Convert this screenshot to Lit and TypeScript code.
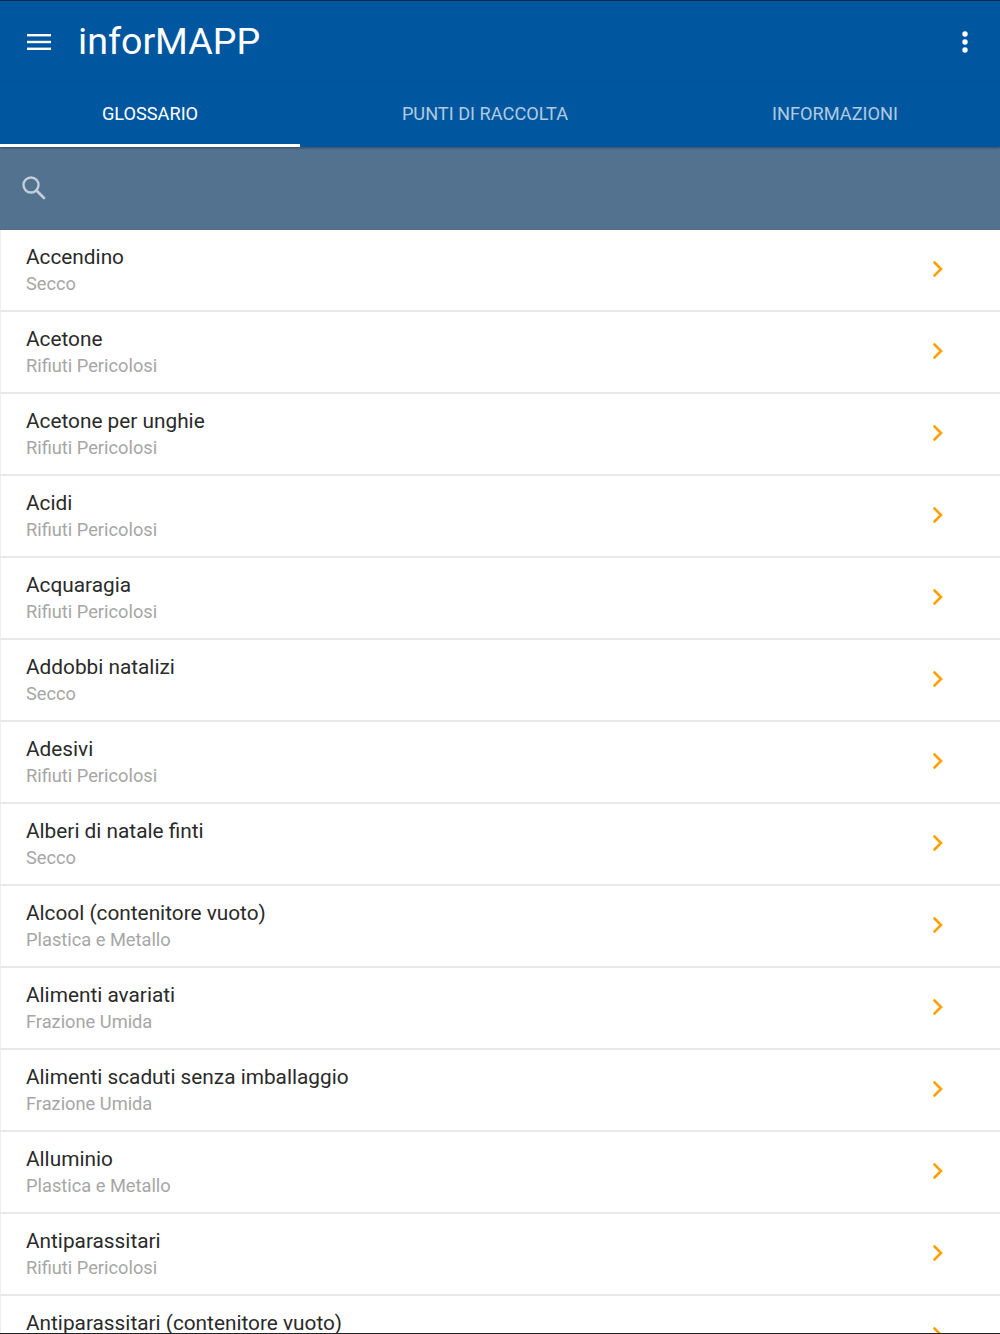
import { LitElement, html, css, svg } from 'lit';
import { customElement } from 'lit/decorators.js';

const items = [
  ['Accendino', 'Secco'],
  ['Acetone', 'Rifiuti Pericolosi'],
  ['Acetone per unghie', 'Rifiuti Pericolosi'],
  ['Acidi', 'Rifiuti Pericolosi'],
  ['Acquaragia', 'Rifiuti Pericolosi'],
  ['Addobbi natalizi', 'Secco'],
  ['Adesivi', 'Rifiuti Pericolosi'],
  ['Alberi di natale finti', 'Secco'],
  ['Alcool (contenitore vuoto)', 'Plastica e Metallo'],
  ['Alimenti avariati', 'Frazione Umida'],
  ['Alimenti scaduti senza imballaggio', 'Frazione Umida'],
  ['Alluminio', 'Plastica e Metallo'],
  ['Antiparassitari', 'Rifiuti Pericolosi'],
  ['Antiparassitari (contenitore vuoto)', 'Rifiuti Pericolosi'],
];

const chevron = svg`<path d="M1.5 1.5 L8 8 L1.5 14.5" fill="none" stroke="#ffa000" stroke-width="2.6" stroke-linecap="round" stroke-linejoin="miter"/>`;

@customElement('app-root')
export class AppRoot extends LitElement {
  static styles = css`
    :host {
      display: block;
      width: 1000px;
      height: 1334px;
      overflow: hidden;
      position: relative;
      background: #fff;
      font-family: Roboto, sans-serif;
    }
    .toolbar {
      height: 81px;
      box-sizing: border-box;
      border-top: 1px solid #0a2a4a;
      background: #01579f;
      display: flex;
      align-items: center;
      padding: 0 25px 0 27px;
      color: #fff;
    }
    .menu {
      display: block;
      width: 24px;
      height: 16px;
      flex: none;
      margin-top: 2px;
    }
    .title {
      margin: 0 0 1px 27px;
      font-size: 37.6px;
      font-weight: 400;
      flex: 1;
    }
    .more {
      display: block;
      width: 6px;
      height: 22px;
      margin: 2px 7px 0 0;
    }
    .tabs {
      height: 66px;
      background: #01579f;
      display: flex;
      box-shadow: 0 1px 2px rgba(0, 0, 0, 0.35);
      position: relative;
    }
    .tab {
      box-sizing: border-box;
      display: flex;
      align-items: center;
      justify-content: center;
      padding-bottom: 1px;
      font-size: 18.2px;
      color: rgba(255, 255, 255, 0.7);
    }
    .tab.active {
      color: #fff;
      border-bottom: 3px solid #fff;
      padding: 1px 0 0;
    }
    .search {
      height: 83px;
      box-sizing: border-box;
      background: #527290;
      display: flex;
      align-items: center;
      padding: 0 0 3px 21px;
    }
    .search svg {
      display: block;
      width: 25px;
      height: 25px;
    }
    .row {
      height: 82px;
      box-sizing: border-box;
      border-bottom: 2px solid #e8e8e8;
      box-shadow: inset 1px 0 0 #eee;
      display: flex;
      align-items: center;
      padding: 0 57px 3px 26px;
    }
    .text {
      flex: 1;
    }
    .name {
      font-size: 20.8px;
      line-height: 26px;
      padding-top: 1px;
      color: #2a2a2a;
    }
    .cat {
      font-size: 18.25px;
      line-height: 24px;
      margin-top: 2px;
      color: #a6a6a6;
      margin-bottom: -2px;
    }
    .chev {
      display: block;
      width: 10px;
      height: 16px;
    }
    .edge {
      position: absolute;
      left: 0;
      right: 0;
      bottom: 0;
      height: 1px;
      background: #222;
    }
  `;

  render() {
    return html`
      <div class="toolbar">
        <svg class="menu" viewBox="0 0 24 16">
          <rect x="0" y="0" width="24" height="2.4" fill="#fff"/>
          <rect x="0" y="6.8" width="24" height="2.4" fill="#fff"/>
          <rect x="0" y="13.6" width="24" height="2.4" fill="#fff"/>
        </svg>
        <div class="title">inforMAPP</div>
        <svg class="more" viewBox="0 0 6 22">
          <circle cx="3" cy="3" r="2.7" fill="#fff"/>
          <circle cx="3" cy="11" r="2.7" fill="#fff"/>
          <circle cx="3" cy="19" r="2.7" fill="#fff"/>
        </svg>
      </div>
      <div class="tabs">
        <div class="tab active" style="width:300px">GLOSSARIO</div>
        <div class="tab" style="width:370px">PUNTI DI RACCOLTA</div>
        <div class="tab" style="width:330px">INFORMAZIONI</div>
      </div>
      <div class="search">
        <svg viewBox="0 0 25 25">
          <circle cx="10" cy="10" r="7.5" fill="none" stroke="#c3ced8" stroke-width="2.4"/>
          <path d="M15.5 15.5 L23 23" stroke="#c3ced8" stroke-width="2.8" stroke-linecap="round"/>
        </svg>
      </div>
      ${items.map(
        ([name, cat]) => html`
          <div class="row">
            <div class="text">
              <div class="name">${name}</div>
              <div class="cat">${cat}</div>
            </div>
            <svg class="chev" viewBox="0 0 10 16">${chevron}</svg>
          </div>
        `
      )}
      <div class="edge"></div>
    `;
  }
}
